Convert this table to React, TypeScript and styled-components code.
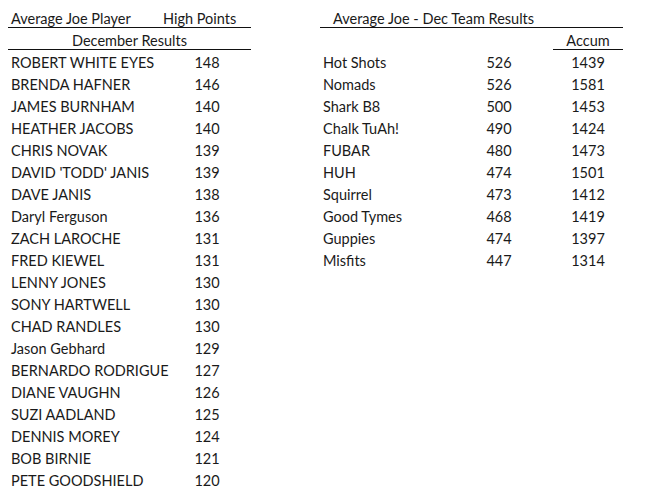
import * as React from 'react'
import styled, { createGlobalStyle } from 'styled-components'

const GlobalStyle = createGlobalStyle`
  body {
    margin: 0;
    background: #fff;
    font-family: Lato, 'Open Sans', 'Liberation Sans', sans-serif;
    color: #1a1a1a;
  }
`

const Sheet = styled.div`
  display: flex;
  align-items: flex-start;
  gap: 69px;
  padding: 6px 0 0 8px;
  font-size: 14.5px;
`

const Table = styled.div<{ $cols: string }>`
  display: grid;
  grid-template-columns: ${(p) => p.$cols};
  grid-auto-rows: 22px;
`

const Cell = styled.div<{ $align?: 'left' | 'center'; $line?: boolean; $span?: number; $pad?: number }>`
  display: flex;
  align-items: center;
  justify-content: ${(p) => (p.$align === 'center' ? 'center' : 'flex-start')};
  padding-left: ${(p) => p.$pad ?? 3}px;
  padding-top: 4px;
  white-space: nowrap;
  box-sizing: border-box;
  border-bottom: 1px solid ${(p) => (p.$line ? '#111' : 'transparent')};
  grid-column: ${(p) => (p.$span ? `span ${p.$span}` : 'auto')};
`

const players: [string, number][] = [
  ['ROBERT WHITE EYES', 148],
  ['BRENDA HAFNER', 146],
  ['JAMES BURNHAM', 140],
  ['HEATHER JACOBS', 140],
  ['CHRIS NOVAK', 139],
  ["DAVID 'TODD' JANIS", 139],
  ['DAVE JANIS', 138],
  ['Daryl Ferguson', 136],
  ['ZACH LAROCHE', 131],
  ['FRED KIEWEL', 131],
  ['LENNY JONES', 130],
  ['SONY HARTWELL', 130],
  ['CHAD RANDLES', 130],
  ['Jason Gebhard', 129],
  ['BERNARDO RODRIGUE', 127],
  ['DIANE VAUGHN', 126],
  ['SUZI AADLAND', 125],
  ['DENNIS MOREY', 124],
  ['BOB BIRNIE', 121],
  ['PETE GOODSHIELD', 120],
]

const teams: [string, number, number][] = [
  ['Hot Shots', 526, 1439],
  ['Nomads', 526, 1581],
  ['Shark B8', 500, 1453],
  ['Chalk TuAh!', 490, 1424],
  ['FUBAR', 480, 1473],
  ['HUH', 474, 1501],
  ['Squirrel', 473, 1412],
  ['Good Tymes', 468, 1419],
  ['Guppies', 474, 1397],
  ['Misfits', 447, 1314],
]

export default function App() {
  return (
    <>
      <GlobalStyle />
      <Sheet>
        <Table $cols="155px 88px">
          <Cell $line>Average Joe Player</Cell>
          <Cell $line $pad={0}>High Points</Cell>
          <Cell $line $span={2} $align="center" $pad={0}>
            December Results
          </Cell>
          {players.map(([name, pts]) => (
            <React.Fragment key={name}>
              <Cell>{name}</Cell>
              <Cell $align="center" $pad={0}>{pts}</Cell>
            </React.Fragment>
          ))}
        </Table>
        <Table $cols="125px 108px 70px">
          <Cell $line $span={3} $pad={13}>
            Average Joe - Dec Team Results
          </Cell>
          <Cell $span={2} />
          <Cell $line $align="center" $pad={0}>Accum</Cell>
          {teams.map(([name, score, accum]) => (
            <React.Fragment key={name}>
              <Cell>{name}</Cell>
              <Cell $align="center" $pad={0}>{score}</Cell>
              <Cell $align="center" $pad={0}>{accum}</Cell>
            </React.Fragment>
          ))}
        </Table>
      </Sheet>
    </>
  )
}
